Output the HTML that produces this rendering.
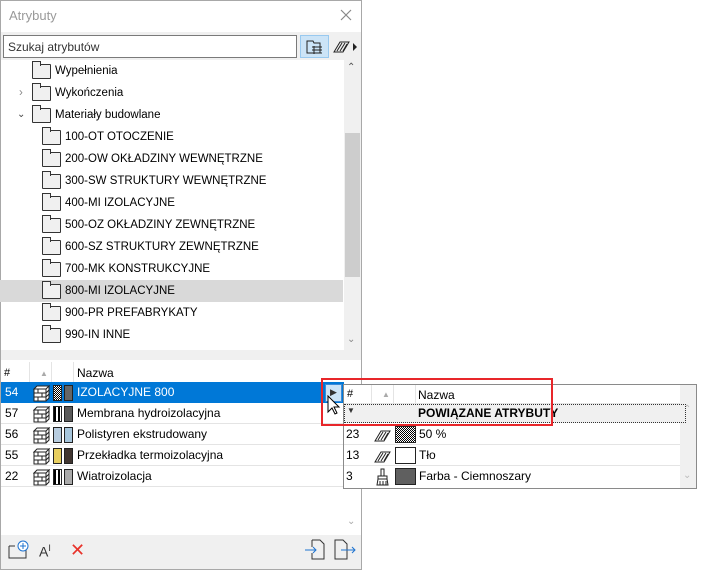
<!DOCTYPE html>
<html><head><meta charset="utf-8"><style>
*{box-sizing:border-box;margin:0;padding:0}
body{width:708px;height:570px;background:#fff;font-family:"Liberation Sans",sans-serif;font-size:12px;color:#000;position:relative;overflow:hidden}
.a{position:absolute}
.panel{left:0;top:0;width:362px;height:570px;border:1px solid #a8a8a8;background:#f0f0f0}
.tr{position:absolute;left:0;width:343px;height:22px;line-height:22px;font-size:11.5px}
.fold{position:absolute;width:19px;height:15px;border:1px solid #333;background:#f0f0f0;border-radius:1px}
.fold:before{content:"";position:absolute;left:-1px;top:-4px;width:7px;height:4px;border:1px solid #333;border-bottom:none;background:#f0f0f0}
.lr{position:absolute;left:1px;width:343px;height:21px;line-height:21px;border-bottom:1px solid #e4e4e4;font-size:12px}
.sw{position:absolute;top:3px;width:9px;height:16px;border:1px solid #222}
.pr{position:absolute;left:344px;width:336px;height:21px;line-height:21px;border-bottom:1px solid #e4e4e4}
.br{position:absolute;left:32px;top:3px}
</style></head><body>
<svg width="0" height="0" style="position:absolute"><defs><g id="brick"><path d="M4 1h12l-3 3H1zM1 4h12v12H1zM13 4l3-3v12l-3 3" fill="#fff" stroke="#222"/><path d="M1 8h12M1 12h12M5 4v4M9 8v4M5 12v4M13 8l3-3M13 12l3-3" stroke="#222"/></g></defs></svg>
<div class="a panel"></div>
<div class="a" style="left:1px;top:1px;width:360px;height:31px;background:#fff"></div>
<div class="a" style="left:9px;top:8px;color:#9a9a9a;font-size:13px">Atrybuty</div>
<svg class="a" style="left:340px;top:9px" width="12" height="12"><path d="M1 1l10 10M11 1L1 11" stroke="#888" stroke-width="1.2"/></svg>
<div class="a" style="left:3px;top:35px;width:294px;height:23px;border:1px solid #7a7a7a;background:#fff;padding:4px 4px;font-size:12px;color:#333">Szukaj atrybutów</div>
<div class="a" style="left:300px;top:35px;width:29px;height:23px;background:#cce4f7;border:1px solid #99c9ef"></div>
<svg class="a" style="left:305px;top:39px" width="20" height="16"><path d="M2 2h6l1 2h6v10H2z" fill="none" stroke="#222"/><path d="M7 8h10M7 11h10M7 14h10M9 7v8" stroke="#222"/></svg>
<svg class="a" style="left:333px;top:39px" width="26" height="16"><path d="M1 13L7 3h9l-6 10z" fill="none" stroke="#222"/><path d="M4 12l5-8M7 12l5-8M10 12l4-7" stroke="#222"/><path d="M20 4l4 4-4 4z" fill="#222"/></svg>
<div class="a" style="left:1px;top:60px;width:343px;height:290px;background:#fff"></div>
<div class="a" style="left:344px;top:60px;width:17px;height:290px;background:#f0f0f0"></div>
<div class="a" style="left:345px;top:133px;width:15px;height:144px;background:#cdcdcd"></div>
<div class="a" style="left:347px;top:62px;color:#555;font-size:10px">⌃</div>
<div class="a" style="left:347px;top:334px;color:#888;font-size:10px">⌄</div>
<div class="tr" style="top:60px"><div class="fold" style="left:32px;top:4px"></div><span style="position:absolute;left:55px">Wypełnienia</span></div>
<div class="tr" style="top:82px"><span style="position:absolute;left:19px;color:#888">›</span><div class="fold" style="left:32px;top:4px"></div><span style="position:absolute;left:55px">Wykończenia</span></div>
<div class="tr" style="top:104px"><span style="position:absolute;left:17px;color:#444;font-size:10px">⌄</span><div class="fold" style="left:32px;top:4px"></div><span style="position:absolute;left:55px">Materiały budowlane</span></div>
<div class="tr" style="top:126px"><div class="fold" style="left:42px;top:4px"></div><span style="position:absolute;left:65px">100-OT OTOCZENIE</span></div>
<div class="tr" style="top:148px"><div class="fold" style="left:42px;top:4px"></div><span style="position:absolute;left:65px">200-OW OKŁADZINY WEWNĘTRZNE</span></div>
<div class="tr" style="top:170px"><div class="fold" style="left:42px;top:4px"></div><span style="position:absolute;left:65px">300-SW STRUKTURY WEWNĘTRZNE</span></div>
<div class="tr" style="top:192px"><div class="fold" style="left:42px;top:4px"></div><span style="position:absolute;left:65px">400-MI IZOLACYJNE</span></div>
<div class="tr" style="top:214px"><div class="fold" style="left:42px;top:4px"></div><span style="position:absolute;left:65px">500-OZ OKŁADZINY ZEWNĘTRZNE</span></div>
<div class="tr" style="top:236px"><div class="fold" style="left:42px;top:4px"></div><span style="position:absolute;left:65px">600-SZ STRUKTURY ZEWNĘTRZNE</span></div>
<div class="tr" style="top:258px"><div class="fold" style="left:42px;top:4px"></div><span style="position:absolute;left:65px">700-MK KONSTRUKCYJNE</span></div>
<div class="tr" style="top:280px;background:#d9d9d9"><div class="fold" style="left:42px;top:4px"></div><span style="position:absolute;left:65px">800-MI IZOLACYJNE</span></div>
<div class="tr" style="top:302px"><div class="fold" style="left:42px;top:4px"></div><span style="position:absolute;left:65px">900-PR PREFABRYKATY</span></div>
<div class="tr" style="top:324px"><div class="fold" style="left:42px;top:4px"></div><span style="position:absolute;left:65px">990-IN INNE</span></div>
<div class="a" style="left:1px;top:360px;width:360px;height:175px;background:#fff"></div>
<div class="a" style="left:1px;top:362px;width:343px;height:21px;border-bottom:1px solid #e4e4e4"></div>
<div class="a" style="left:29px;top:362px;width:1px;height:21px;background:#e4e4e4"></div>
<div class="a" style="left:51px;top:362px;width:1px;height:21px;background:#e4e4e4"></div>
<div class="a" style="left:73px;top:362px;width:1px;height:21px;background:#e4e4e4"></div>
<div class="a" style="left:4px;top:367px;font-size:11px">#</div>
<div class="a" style="left:40px;top:369px;color:#aaa;font-size:8px">▲</div>
<div class="a" style="left:77px;top:366px">Nazwa</div>
<div class="lr" style="top:382px;background:#0078d7;color:#fff;border:none"><span style="position:absolute;left:4px">54</span><svg class="br" width="18" height="17"><use href="#brick"/></svg><div class="sw" style="left:52px;background:repeating-conic-gradient(#000 0 25%,#fff 0 50%) 0 0/2px 2px"></div><div class="sw" style="left:63px;background:#666"></div><span style="position:absolute;left:76px">IZOLACYJNE 800</span></div>
<div class="lr" style="top:403px"><span style="position:absolute;left:4px">57</span><svg class="br" width="18" height="17"><use href="#brick"/></svg><div class="sw" style="left:52px;background:repeating-linear-gradient(90deg,#000 0 2px,#fff 2px 4px)"></div><div class="sw" style="left:63px;background:#5a5a5a"></div><span style="position:absolute;left:76px">Membrana hydroizolacyjna</span></div>
<div class="lr" style="top:424px"><span style="position:absolute;left:4px">56</span><svg class="br" width="18" height="17"><use href="#brick"/></svg><div class="sw" style="left:52px;background:#b8cde0"></div><div class="sw" style="left:63px;background:#a7c6dc"></div><span style="position:absolute;left:76px">Polistyren ekstrudowany</span></div>
<div class="lr" style="top:445px"><span style="position:absolute;left:4px">55</span><svg class="br" width="18" height="17"><use href="#brick"/></svg><div class="sw" style="left:52px;background:#e8cf60"></div><div class="sw" style="left:63px;background:#403530"></div><span style="position:absolute;left:76px">Przekładka termoizolacyjna</span></div>
<div class="lr" style="top:466px"><span style="position:absolute;left:4px">22</span><svg class="br" width="18" height="17"><use href="#brick"/></svg><div class="sw" style="left:52px;background:repeating-linear-gradient(90deg,#000 0 2px,#fff 2px 4px)"></div><div class="sw" style="left:63px;background:#aaa"></div><span style="position:absolute;left:76px">Wiatroizolacja</span></div>
<div class="a" style="left:347px;top:516px;color:#aaa;font-size:10px">⌄</div>
<div class="a" style="left:1px;top:535px;width:360px;height:34px;background:#f0f0f0"></div>
<svg class="a" style="left:8px;top:540px" width="22" height="20"><path d="M1 6v12h17V8" fill="none" stroke="#333"/><path d="M1 6h6" stroke="#333"/><circle cx="15" cy="6" r="5" fill="#fff" stroke="#1e73d0"/><path d="M15 3v6M12 6h6" stroke="#1e73d0"/></svg>
<div class="a" style="left:39px;top:543px;font-size:14px;color:#333">A<sup style="font-size:9px">I</sup></div>
<div class="a" style="left:70px;top:540px;color:#e8322a;font-size:18px">✕</div>
<svg class="a" style="left:304px;top:538px" width="22" height="22"><path d="M8 2h8l4 4v15H8v-6M8 9V2" fill="none" stroke="#333"/><path d="M1 12h11M9 9l3 3-3 3" fill="none" stroke="#1e73d0"/></svg>
<svg class="a" style="left:333px;top:538px" width="24" height="22"><path d="M2 2h8l4 4v15H2z" fill="none" stroke="#333"/><path d="M8 12h14M19 9l3 3-3 3" fill="none" stroke="#1e73d0"/></svg>
<div class="a" style="left:343px;top:384px;width:354px;height:105px;border:1px solid #8a8a8a;background:#fff"></div>
<div class="a" style="left:680px;top:385px;width:16px;height:103px;background:#f0f0f0"></div>
<div class="a" style="left:683px;top:404px;color:#bbb;font-size:10px">⌃</div>
<div class="a" style="left:683px;top:470px;color:#bbb;font-size:10px">⌄</div>
<div class="a" style="left:344px;top:385px;width:336px;height:19px;border-bottom:1px solid #e4e4e4"></div>
<div class="a" style="left:371px;top:385px;width:1px;height:19px;background:#e4e4e4"></div>
<div class="a" style="left:393px;top:385px;width:1px;height:19px;background:#e4e4e4"></div>
<div class="a" style="left:415px;top:385px;width:1px;height:19px;background:#e4e4e4"></div>
<div class="a" style="left:347px;top:388px;font-size:11px">#</div>
<div class="a" style="left:382px;top:390px;color:#aaa;font-size:8px">▲</div>
<div class="a" style="left:418px;top:388px">Nazwa</div>
<div class="a" style="left:344px;top:404px;width:342px;height:19px;background:#f0f0f0;border:1px dotted #333"></div>
<div class="a" style="left:347px;top:406px;font-size:8px;color:#333">▼</div>
<div class="a" style="left:418px;top:406px;font-weight:bold">POWIĄZANE ATRYBUTY</div>
<svg width="0" height="0" style="position:absolute"><defs><g id="hat"><path d="M1 14L7 4h9l-6 10z" fill="none" stroke="#222"/><path d="M4 13l5-8M7 13l5-8M10 13l4-7" stroke="#222"/></g></defs></svg>
<div class="pr" style="top:424px"><span style="position:absolute;left:2px">23</span><svg style="position:absolute;left:30px;top:3px" width="18" height="16"><use href="#hat"/></svg><div style="position:absolute;left:51px;top:2px;width:21px;height:17px;border:1px solid #222;background:repeating-conic-gradient(#000 0 25%,#fff 0 50%) 0 0/2px 2px"></div><span style="position:absolute;left:75px">50 %</span></div>
<div class="pr" style="top:445px"><span style="position:absolute;left:2px">13</span><svg style="position:absolute;left:30px;top:3px" width="18" height="16"><use href="#hat"/></svg><div style="position:absolute;left:51px;top:2px;width:21px;height:17px;border:1px solid #222;background:#fff"></div><span style="position:absolute;left:75px">Tło</span></div>
<div class="pr" style="top:466px;border:none"><span style="position:absolute;left:2px">3</span><svg style="position:absolute;left:31px;top:2px" width="16" height="18"><path d="M6 1h3v7H6z" fill="none" stroke="#222"/><path d="M3 8h9v3H3zM3 11l-1 6h11l-1-6M5 13v4M8 13v4M11 13v4" fill="none" stroke="#222"/></svg><div style="position:absolute;left:51px;top:2px;width:21px;height:17px;border:1px solid #222;background:#5f5f5f"></div><span style="position:absolute;left:75px">Farba - Ciemnoszary</span></div>
<div class="a" style="left:325px;top:384px;width:17px;height:18px;background:#cce4f7;border:1px solid #3c8ad8"></div>
<div class="a" style="left:330px;top:387px;font-size:9px;color:#333">▶</div>
<svg class="a" style="left:327px;top:395px" width="14" height="22"><path d="M1 1v16l4-4 3 6 2-1-3-6h5z" fill="#fff" stroke="#000"/></svg>
<div class="a" style="left:321px;top:378px;width:232px;height:48px;border:2px solid #e8262a"></div>
</body></html>
